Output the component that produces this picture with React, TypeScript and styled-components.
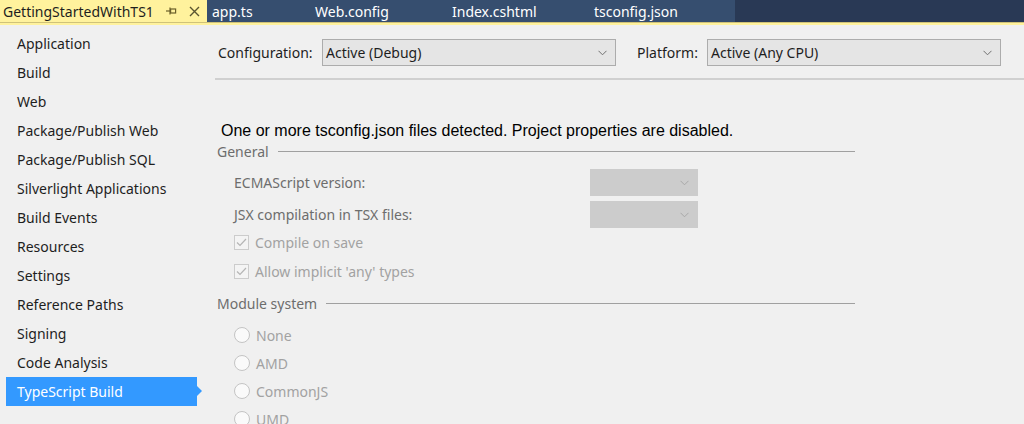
import React from 'react';
import styled, { createGlobalStyle } from 'styled-components';

const GlobalStyle = createGlobalStyle`
  html, body {
    margin: 0;
    padding: 0;
    background: #f0f0f0;
    overflow: hidden;
  }
  body {
    font-family: "Noto Sans", "Open Sans", sans-serif;
  }
`;

//<editor-fold desc="Styles">
const Page = styled.div`
  width: 1024px;
  height: 424px;
  overflow: hidden;
  background: #f0f0f0;
`;

const TabStrip = styled.div`
  display: flex;
  height: 22px;
  background: #293955;
`;

const ActiveTab = styled.div`
  display: flex;
  align-items: center;
  width: 207px;
  padding-left: 3px;
  box-sizing: border-box;
  background: #fff29d;
  color: #1e1e1e;
  font-size: 14px;
`;

const TabName = styled.span`
  flex: 1;
  white-space: nowrap;
`;

const TabIcon = styled.span`
  display: flex;
  align-items: center;
  justify-content: center;
  width: 20px;
  margin-right: 3px;
`;

const Tab = styled.div<{ $w: number }>`
  display: flex;
  align-items: center;
  width: ${p => p.$w}px;
  padding-left: 5px;
  box-sizing: border-box;
  background: #364e6f;
  color: #ffffff;
  font-size: 14px;
  white-space: nowrap;
`;

const YellowRule = styled.div`
  height: 3px;
  background: #fff29d;
  border-top: 1px solid #cfc27a;
  box-sizing: border-box;
`;

const Body = styled.div`
  display: flex;
`;

const Sidebar = styled.div`
  width: 215px;
  flex: none;
  padding-top: 4px;
  padding-left: 6px;
  box-sizing: border-box;
`;

const NavItem = styled.div<{ $selected?: boolean }>`
  position: relative;
  width: 191px;
  height: 29px;
  line-height: 29px;
  padding-left: 11px;
  box-sizing: border-box;
  font-size: 14px;
  color: ${p => (p.$selected ? '#ffffff' : '#1e1e1e')};
  background: ${p => (p.$selected ? '#3399ff' : 'transparent')};
  white-space: nowrap;

  &::after {
    content: '';
    display: ${p => (p.$selected ? 'block' : 'none')};
    position: absolute;
    right: -5px;
    top: 9px;
    border-left: 5px solid #3399ff;
    border-top: 5px solid transparent;
    border-bottom: 5px solid transparent;
  }
`;

const Main = styled.div`
  flex: 1;
  padding-top: 14px;
`;

const ConfigRow = styled.div`
  display: flex;
  align-items: center;
  height: 27px;
  padding-left: 3px;
  font-size: 14px;
  color: #1e1e1e;
`;

const ConfigLabel = styled.span<{ $w: number; $gap?: number }>`
  width: ${p => p.$w}px;
  margin-left: ${p => p.$gap ?? 0}px;
  flex: none;
`;

const Select = styled.div<{ $w: number; $disabled?: boolean }>`
  display: flex;
  align-items: center;
  justify-content: space-between;
  width: ${p => p.$w}px;
  height: 27px;
  box-sizing: border-box;
  padding: 0 8px 0 3px;
  background: ${p => (p.$disabled ? '#cccccc' : '#e5e5e5')};
  border: 1px solid ${p => (p.$disabled ? '#cccccc' : '#acacac')};
  color: #1e1e1e;
  font-size: 14px;
`;

const Divider = styled.div`
  height: 2px;
  margin-top: 12px;
  background: #d0d0d0;
`;

const Notice = styled.div`
  margin-top: 41px;
  padding-left: 6px;
  height: 19px;
  line-height: 19px;
  font-family: "Liberation Sans", Arial, sans-serif;
  font-size: 16px;
  color: #000000;
`;

const Group = styled.div`
  width: 640px;
`;

const GroupHeader = styled.div<{ $top: number }>`
  display: flex;
  align-items: center;
  gap: 9px;
  height: 20px;
  margin-top: ${p => p.$top}px;
  padding-left: 2px;
  font-size: 14px;
  color: #6d6d6d;

  &::after {
    content: '';
    flex: 1;
    height: 1px;
    background: #a0a0a0;
  }
`;

const FieldRow = styled.div<{ $top: number }>`
  display: flex;
  align-items: center;
  height: 27px;
  margin-top: ${p => p.$top}px;
  padding-left: 19px;
  font-size: 14px;
  color: #6d6d6d;
`;

const FieldLabel = styled.span`
  width: 356px;
  flex: none;
`;

const OptionList = styled.div`
  padding-top: 8px;
`;

const OptionRow = styled.div<{ $h: number }>`
  display: flex;
  align-items: center;
  gap: 6px;
  height: ${p => p.$h}px;
  padding-left: 19px;
  font-size: 14px;
  color: #a2a2a2;
`;

const CheckBox = styled.span`
  display: flex;
  align-items: center;
  justify-content: center;
  width: 15px;
  height: 15px;
  box-sizing: border-box;
  border: 1px solid #cccccc;
  background: #f4f4f4;
`;

const Radio = styled.span`
  width: 16px;
  height: 16px;
  box-sizing: border-box;
  border: 1px solid #c4c4c4;
  border-radius: 50%;
  background: #fafafa;
`;
//</editor-fold>

const Chevron = ({ color = '#707070' }: { color?: string }) => (
  <svg width="9" height="6" viewBox="0 0 9 6">
    <path d="M0.5 0.8 L4.5 4.8 L8.5 0.8" fill="none" stroke={color} strokeWidth="1" />
  </svg>
);

const PinIcon = () => (
  <svg width="12" height="10" viewBox="0 0 12 10">
    <path d="M1 5 H5" stroke="#6b5f2a" strokeWidth="1.2" />
    <path d="M5 1.5 V8.5" stroke="#6b5f2a" strokeWidth="1.2" />
    <rect x="5.6" y="3" width="5" height="4" fill="none" stroke="#6b5f2a" strokeWidth="1.2" />
  </svg>
);

const CloseIcon = () => (
  <svg width="11" height="11" viewBox="0 0 11 11">
    <path d="M1 1 L10 10 M10 1 L1 10" stroke="#5a5530" strokeWidth="1.4" />
  </svg>
);

const CheckMark = () => (
  <svg width="11" height="9" viewBox="0 0 11 9">
    <path d="M1 4.5 L4 7.5 L10 1" fill="none" stroke="#b5b5b5" strokeWidth="1.2" />
  </svg>
);

const tabs = [
  { name: 'app.ts', w: 103 },
  { name: 'Web.config', w: 137 },
  { name: 'Index.cshtml', w: 142 },
  { name: 'tsconfig.json', w: 146 },
];

const navItems = [
  'Application',
  'Build',
  'Web',
  'Package/Publish Web',
  'Package/Publish SQL',
  'Silverlight Applications',
  'Build Events',
  'Resources',
  'Settings',
  'Reference Paths',
  'Signing',
  'Code Analysis',
  'TypeScript Build',
];

const modules = ['None', 'AMD', 'CommonJS', 'UMD'];

export default function App() {
  return (
    <Page>
      <GlobalStyle />
      <TabStrip>
        <ActiveTab>
          <TabName>GettingStartedWithTS1</TabName>
          <TabIcon><PinIcon /></TabIcon>
          <TabIcon><CloseIcon /></TabIcon>
        </ActiveTab>
        {tabs.map(t => (
          <Tab key={t.name} $w={t.w}>{t.name}</Tab>
        ))}
      </TabStrip>
      <YellowRule />
      <Body>
        <Sidebar>
          {navItems.map(item => (
            <NavItem key={item} $selected={item === 'TypeScript Build'}>
              {item}
            </NavItem>
          ))}
        </Sidebar>
        <Main>
          <ConfigRow>
            <ConfigLabel $w={104}>Configuration:</ConfigLabel>
            <Select $w={294}>
              Active (Debug)
              <Chevron />
            </Select>
            <ConfigLabel $w={70} $gap={21}>Platform:</ConfigLabel>
            <Select $w={294}>
              Active (Any CPU)
              <Chevron />
            </Select>
          </ConfigRow>
          <Divider />
          <Notice>One or more tsconfig.json files detected. Project properties are disabled.</Notice>
          <Group>
            <GroupHeader $top={1}>General</GroupHeader>
            <FieldRow $top={8}>
              <FieldLabel>ECMAScript version:</FieldLabel>
              <Select $w={108} $disabled>
                <span />
                <Chevron color="#a8a8a8" />
              </Select>
            </FieldRow>
            <FieldRow $top={5}>
              <FieldLabel>JSX compilation in TSX files:</FieldLabel>
              <Select $w={108} $disabled>
                <span />
                <Chevron color="#a8a8a8" />
              </Select>
            </FieldRow>
            <OptionRow $h={29}>
              <CheckBox><CheckMark /></CheckBox>
              Compile on save
            </OptionRow>
            <OptionRow $h={29}>
              <CheckBox><CheckMark /></CheckBox>
              Allow implicit 'any' types
            </OptionRow>
            <GroupHeader $top={7}>Module system</GroupHeader>
            <OptionList>
              {modules.map(m => (
                <OptionRow key={m} $h={28}>
                  <Radio />
                  {m}
                </OptionRow>
              ))}
            </OptionList>
          </Group>
        </Main>
      </Body>
    </Page>
  );
}
